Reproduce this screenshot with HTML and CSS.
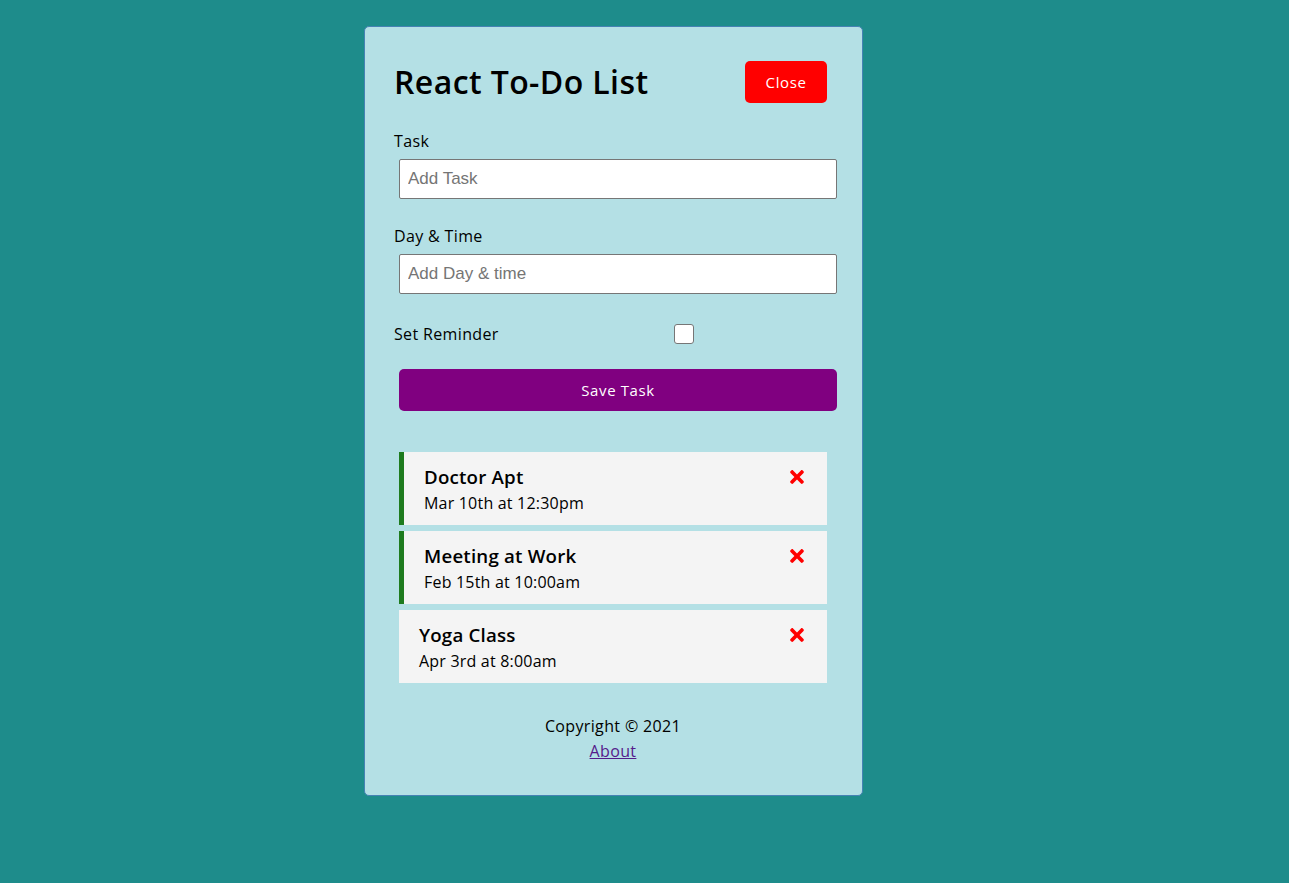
FILE: index.html
```html
<!DOCTYPE html>
<html>
<head>
<meta charset="utf-8">
<link rel="stylesheet" href="styles.css">
</head>
<body>
<div class="page">
  <div class="container">
    <header class="header">
      <h1>React To-Do List</h1>
      <button class="btn btn-close">Close</button>
    </header>
    <form class="add-form">
      <div class="form-control">
        <label>Task</label>
        <input type="text" placeholder="Add Task">
      </div>
      <div class="form-control">
        <label>Day &amp; Time</label>
        <input type="text" placeholder="Add Day &amp; time">
      </div>
      <div class="form-control form-control-check">
        <label>Set Reminder</label>
        <span class="check-wrap"><span class="check"></span></span>
      </div>
      <button type="button" class="btn btn-block">Save Task</button>
    </form>
    <div class="tasks">
      <div class="task reminder">
        <h3>Doctor Apt <svg class="times" viewBox="0 0 352 512"><path d="M242.7 256l100.1-100.1c12.3-12.3 12.3-32.2 0-44.5l-22.2-22.2c-12.3-12.3-32.2-12.3-44.5 0L176 189.3 75.9 89.2c-12.3-12.3-32.2-12.3-44.5 0L9.2 111.4c-12.3 12.3-12.3 32.2 0 44.5L109.3 256 9.2 356.1c-12.3 12.3-12.3 32.2 0 44.5l22.2 22.2c12.3 12.3 32.2 12.3 44.5 0L176 322.7l100.1 100.1c12.3 12.3 32.2 12.3 44.5 0l22.2-22.2c12.3-12.3 12.3-32.2 0-44.5L242.7 256z"/></svg></h3>
        <p>Mar 10th at 12:30pm</p>
      </div>
      <div class="task reminder">
        <h3>Meeting at Work <svg class="times" viewBox="0 0 352 512"><path d="M242.7 256l100.1-100.1c12.3-12.3 12.3-32.2 0-44.5l-22.2-22.2c-12.3-12.3-32.2-12.3-44.5 0L176 189.3 75.9 89.2c-12.3-12.3-32.2-12.3-44.5 0L9.2 111.4c-12.3 12.3-12.3 32.2 0 44.5L109.3 256 9.2 356.1c-12.3 12.3-12.3 32.2 0 44.5l22.2 22.2c12.3 12.3 32.2 12.3 44.5 0L176 322.7l100.1 100.1c12.3 12.3 32.2 12.3 44.5 0l22.2-22.2c12.3-12.3 12.3-32.2 0-44.5L242.7 256z"/></svg></h3>
        <p>Feb 15th at 10:00am</p>
      </div>
      <div class="task">
        <h3>Yoga Class <svg class="times" viewBox="0 0 352 512"><path d="M242.7 256l100.1-100.1c12.3-12.3 12.3-32.2 0-44.5l-22.2-22.2c-12.3-12.3-32.2-12.3-44.5 0L176 189.3 75.9 89.2c-12.3-12.3-32.2-12.3-44.5 0L9.2 111.4c-12.3 12.3-12.3 32.2 0 44.5L109.3 256 9.2 356.1c-12.3 12.3-12.3 32.2 0 44.5l22.2 22.2c12.3 12.3 32.2 12.3 44.5 0L176 322.7l100.1 100.1c12.3 12.3 32.2 12.3 44.5 0l22.2-22.2c12.3-12.3 12.3-32.2 0-44.5L242.7 256z"/></svg></h3>
        <p>Apr 3rd at 8:00am</p>
      </div>
    </div>
    <footer class="footer">
      <p>Copyright &copy; 2021</p>
      <a href="#" class="about">About</a>
    </footer>
  </div>
</div>
</body>
</html>
```
FILE: styles.css
```css
* {
  box-sizing: border-box;
  margin: 0;
  padding: 0;
}

html, body {
  background: #1e8c8b;
}

body {
  font-family: "Open Sans", "DejaVu Sans", sans-serif;
  color: #000;
  font-size: 16px;
  letter-spacing: 0.35px;
}

.page {
  width: 1227px;
  padding-top: 26px;
}

.container {
  width: 499px;
  margin: 0 auto;
  background: #b4e0e5;
  border: 1px solid #4682b4;
  border-radius: 5px;
  padding: 29px 30px 31px 29px;
}

.header {
  display: flex;
  justify-content: space-between;
  align-items: center;
  height: 52px;
  margin-bottom: 21px;
}

.header h1 {
  font-size: 32px;
  font-weight: 600;
  line-height: 48px;
  letter-spacing: 0.4px;
}

.btn {
  display: inline-block;
  border: none;
  border-radius: 5px;
  color: #fff;
  font-family: inherit;
  font-size: 15px;
  line-height: 22px;
  letter-spacing: 0.6px;
  padding: 10px 20px;
  margin: 5px;
  cursor: pointer;
}

.btn-close {
  background: #ff0000;
  width: 82px;
  height: 42px;
}

.btn-block {
  display: block;
  width: 100%;
  height: 42px;
  background: #800080;
}

.form-control {
  display: flex;
  flex-direction: column;
  align-items: flex-start;
  margin-bottom: 20px;
}

.form-control label {
  display: block;
  line-height: 25px;
}

.form-control input {
  width: 100%;
  height: 40px;
  margin: 5px;
  padding: 3px 8px;
  font-family: "Liberation Sans", Arial, sans-serif;
  font-size: 17px;
  letter-spacing: 0;
  border: 1px solid #767676;
  border-radius: 2px;
  background: #fff;
}

.form-control input::placeholder {
  color: #757575;
}

.form-control-check {
  flex-direction: row;
  align-items: center;
  margin-top: 14px;
  margin-bottom: 20px;
  height: 30px;
}

.form-control-check label {
  flex: 1;
}

.check-wrap {
  flex: 2;
  display: flex;
  justify-content: center;
  margin: 5px;
}

.check {
  width: 20px;
  height: 20px;
  background: #fff;
  border: 1px solid #767676;
  border-radius: 3px;
}

.tasks {
  margin-top: 41px;
}

.task {
  background: #f4f4f4;
  margin: 0 5px 6px 5px;
  padding: 10px 20px 10px 20px;
  height: 73px;
}

.task.reminder {
  border-left: 5px solid #1e7b1e;
}

.task h3 {
  display: flex;
  justify-content: space-between;
  align-items: center;
  font-size: 18.7px;
  font-weight: 600;
  line-height: 29px;
  letter-spacing: 0.2px;
}

.task p {
  line-height: 25px;
  font-size: 16px;
  letter-spacing: 0.2px;
}

.times {
  width: 14px;
  height: 20px;
  fill: #ff0000;
  margin-right: 3px;
}

.footer {
  margin-top: 31px;
  text-align: center;
  line-height: 25px;
}

.about {
  color: #551a8b;
}
```
